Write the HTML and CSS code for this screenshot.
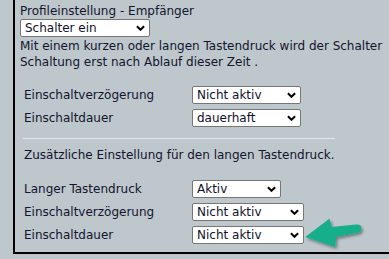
FILE: index.html
```html
<!DOCTYPE html>
<html lang="de">
<head>
<meta charset="utf-8">
<link rel="stylesheet" href="styles.css">
</head>
<body>
<div class="panel">
  <div class="title">Profileinstellung - Empfänger</div>
  <div class="select sel-top"><span>Schalter ein</span><svg class="chev" viewBox="0 0 10 6" width="10" height="6"><path d="M1 1 L5 5 L9 1" /></svg></div>
  <p class="desc">Mit einem kurzen oder langen Tastendruck wird der Schalter<br>Schaltung erst nach Ablauf dieser Zeit .</p>

  <div class="rows rows-1">
    <div class="row"><span class="label">Einschaltverzögerung</span><div class="select w109"><span>Nicht aktiv</span><svg class="chev" viewBox="0 0 10 6" width="10" height="6"><path d="M1 1 L5 5 L9 1" /></svg></div></div>
    <div class="row"><span class="label">Einschaltdauer</span><div class="select w109"><span>dauerhaft</span><svg class="chev" viewBox="0 0 10 6" width="10" height="6"><path d="M1 1 L5 5 L9 1" /></svg></div></div>
  </div>

  <hr class="sep">

  <p class="note">Zusätzliche Einstellung für den langen Tastendruck.</p>

  <div class="rows rows-2">
    <div class="row"><span class="label">Langer Tastendruck</span><div class="select w89"><span>Aktiv</span><svg class="chev" viewBox="0 0 10 6" width="10" height="6"><path d="M1 1 L5 5 L9 1" /></svg></div></div>
    <div class="row"><span class="label">Einschaltverzögerung</span><div class="select w112"><span>Nicht aktiv</span><svg class="chev" viewBox="0 0 10 6" width="10" height="6"><path d="M1 1 L5 5 L9 1" /></svg></div></div>
    <div class="row"><span class="label">Einschaltdauer</span><div class="select w112"><span>Nicht aktiv</span><svg class="chev" viewBox="0 0 10 6" width="10" height="6"><path d="M1 1 L5 5 L9 1" /></svg>
      <svg class="arrow" viewBox="0 0 68 38" width="68" height="38">
        <defs>
          <filter id="sh" x="-20%" y="-30%" width="150%" height="170%">
            <feDropShadow dx="1.5" dy="2" stdDeviation="1.6" flood-color="#000" flood-opacity="0.4"/>
          </filter>
        </defs>
        <path filter="url(#sh)" fill="#13ae8b" d="M4.3 23 L28.3 4.7 L31 13 L55 10.5 Q60.5 10 60.3 14.7 Q60 18.5 56.7 18.7 L35 23 L34.3 33 Z"/>
      </svg>
    </div></div>
  </div>
</div>
</body>
</html>
```
FILE: styles.css
```css
html, body {
  margin: 0;
  padding: 0;
}
body {
  background: #bdc7cc;
  font-family: "DejaVu Sans", sans-serif;
  font-size: 12px;
  color: #14142e;
  width: 389px;
  height: 259px;
  overflow: hidden;
}
.panel {
  margin-left: 13px;
  width: 369px;
  height: 252px;
  border-left: 2px solid #000;
  border-bottom: 2px solid #000;
  padding-left: 5px;
  box-sizing: content-box;
  white-space: nowrap;
}
.title {
  padding-top: 3px;
  line-height: 16px;
}
.select {
  box-sizing: border-box;
  height: 18px;
  background: #fff;
  border: 1px solid #767676;
  border-radius: 2px;
  display: flex;
  align-items: center;
  justify-content: space-between;
  padding: 0 4px 0 4px;
  color: #10102a;
  position: relative;
}
.chev {
  fill: none;
  stroke: #000;
  stroke-width: 2.2;
  stroke-linecap: butt;
  width: 9px;
  height: 6px;
}
.sel-top {
  width: 130px;
  margin-top: 0;
}
.desc {
  margin: 1px 0 0 0;
  line-height: 16px;
}
.rows {
  padding-left: 4px;
  display: flex;
  flex-direction: column;
  gap: 5px;
}
.rows-1 {
  margin-top: 16px;
}
.row {
  display: grid;
  grid-template-columns: 168px auto;
  align-items: center;
  height: 18px;
}
.w109 { width: 109px; }
.w89 { width: 89px; }
.w112 { width: 112px; }
.sep {
  margin: 11px 0 0 3px;
  width: 312px;
  border: 0;
  height: 1px;
  background: #e4e6e8;
}
.note {
  margin: 8px 0 0 4px;
  line-height: 16px;
}
.rows-2 {
  margin-top: 17px;
}
.arrow {
  position: absolute;
  left: 108px;
  top: -13px;
}
```
